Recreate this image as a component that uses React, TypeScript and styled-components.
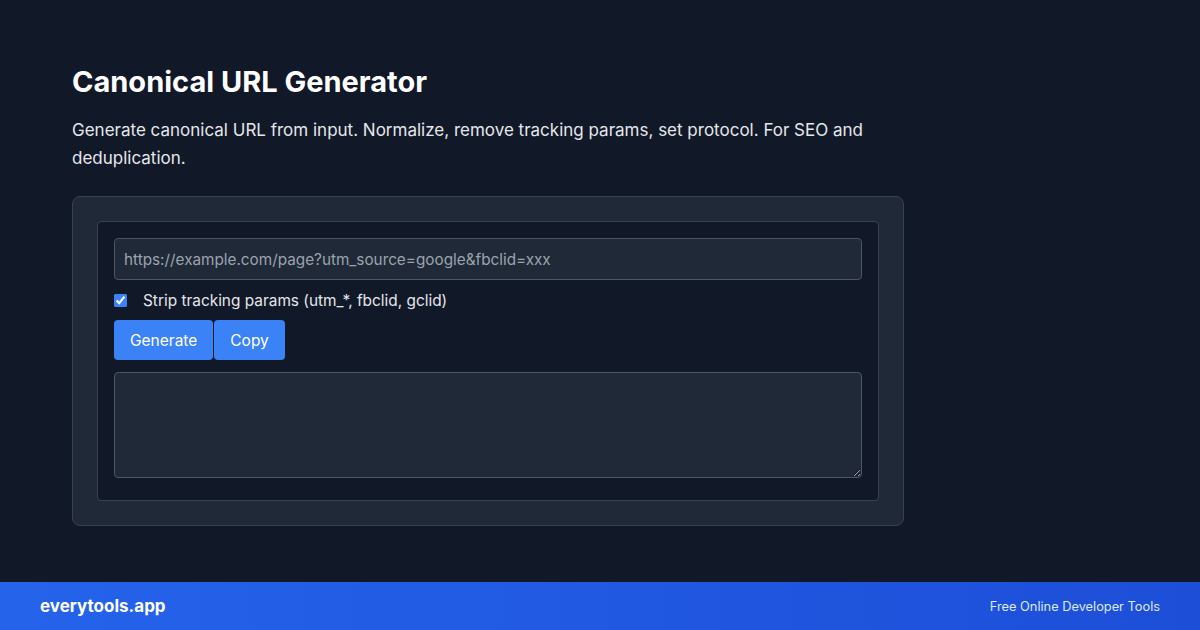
import styled, { createGlobalStyle } from 'styled-components';

const Global = createGlobalStyle`
  html, body {
    margin: 0;
    padding: 0;
    background: #111827;
  }
  * { box-sizing: border-box; }
`;

const Page = styled.div`
  width: 1200px;
  height: 630px;
  display: flex;
  flex-direction: column;
  font-family: Inter, "Liberation Sans", sans-serif;
  color: #f9fafb;
  background: #111827;
`;

const Main = styled.main`
  flex: 1;
  padding: 64px 72px 0;
`;

const Title = styled.h1`
  margin: 0;
  font-size: 29px;
  line-height: 36px;
  font-weight: 700;
  color: #ffffff;
`;

const Lead = styled.p`
  margin: 16px 0 24px;
  max-width: 800px;
  font-size: 17px;
  line-height: 28px;
  color: #e5e7eb;
`;

const Card = styled.section`
  width: 832px;
  padding: 24px;
  background: #1f2937;
  border: 1px solid #374151;
  border-radius: 8px;
`;

const Panel = styled.div`
  padding: 16px;
  background: #111827;
  border: 1px solid #374151;
  border-radius: 4px;
  display: flex;
  flex-direction: column;
`;

const TextInput = styled.input`
  height: 42px;
  width: 100%;
  padding: 0 9px;
  background: #1f2937;
  border: 1px solid #4b5563;
  border-radius: 4px;
  font-family: inherit;
  font-size: 15.3px;
  color: #f3f4f6;
  outline: none;
  &::placeholder { color: #9ca3af; }
`;

const CheckRow = styled.label`
  display: flex;
  align-items: center;
  gap: 16px;
  margin: 8px 0;
  height: 24px;
  font-size: 15.4px;
  color: #e5e7eb;
`;

const Check = styled.input`
  margin: 0;
  width: 13px;
  height: 13px;
  accent-color: #3b82f6;
`;

const Buttons = styled.div`
  display: flex;
  gap: 1px;
`;

const Button = styled.button`
  height: 40px;
  padding: 0 16px;
  background: #3b82f6;
  color: #ffffff;
  border: none;
  border-radius: 4px;
  font-family: inherit;
  font-size: 15.5px;
  cursor: pointer;
`;

const Output = styled.textarea`
  margin-top: 12px;
  width: 100%;
  height: 106px;
  background: #1f2937;
  border: 1px solid #4b5563;
  border-radius: 4px;
  color: #f3f4f6;
  font-family: inherit;
  font-size: 14px;
  padding: 8px;
  display: block;
  margin-bottom: 6px;
  outline: none;
`;

const Footer = styled.footer`
  height: 48px;
  padding: 0 40px;
  display: flex;
  align-items: center;
  justify-content: space-between;
  background: linear-gradient(90deg, #2563eb, #1d4ed8);
`;

const Brand = styled.span`
  font-size: 17px;
  font-weight: 700;
  color: #ffffff;
`;

const Tagline = styled.span`
  font-size: 12.8px;
  color: #dbeafe;
`;

export default function App() {
  return (
    <Page>
      <Global />
      <Main>
        <Title>Canonical URL Generator</Title>
        <Lead>
          Generate canonical URL from input. Normalize, remove tracking params, set protocol. For SEO and
          deduplication.
        </Lead>
        <Card>
          <Panel>
            <TextInput placeholder="https://example.com/page?utm_source=google&fbclid=xxx" />
            <CheckRow>
              <Check type="checkbox" defaultChecked />
              Strip tracking params (utm_*, fbclid, gclid)
            </CheckRow>
            <Buttons>
              <Button>Generate</Button>
              <Button>Copy</Button>
            </Buttons>
            <Output readOnly />
          </Panel>
        </Card>
      </Main>
      <Footer>
        <Brand>everytools.app</Brand>
        <Tagline>Free Online Developer Tools</Tagline>
      </Footer>
    </Page>
  );
}
